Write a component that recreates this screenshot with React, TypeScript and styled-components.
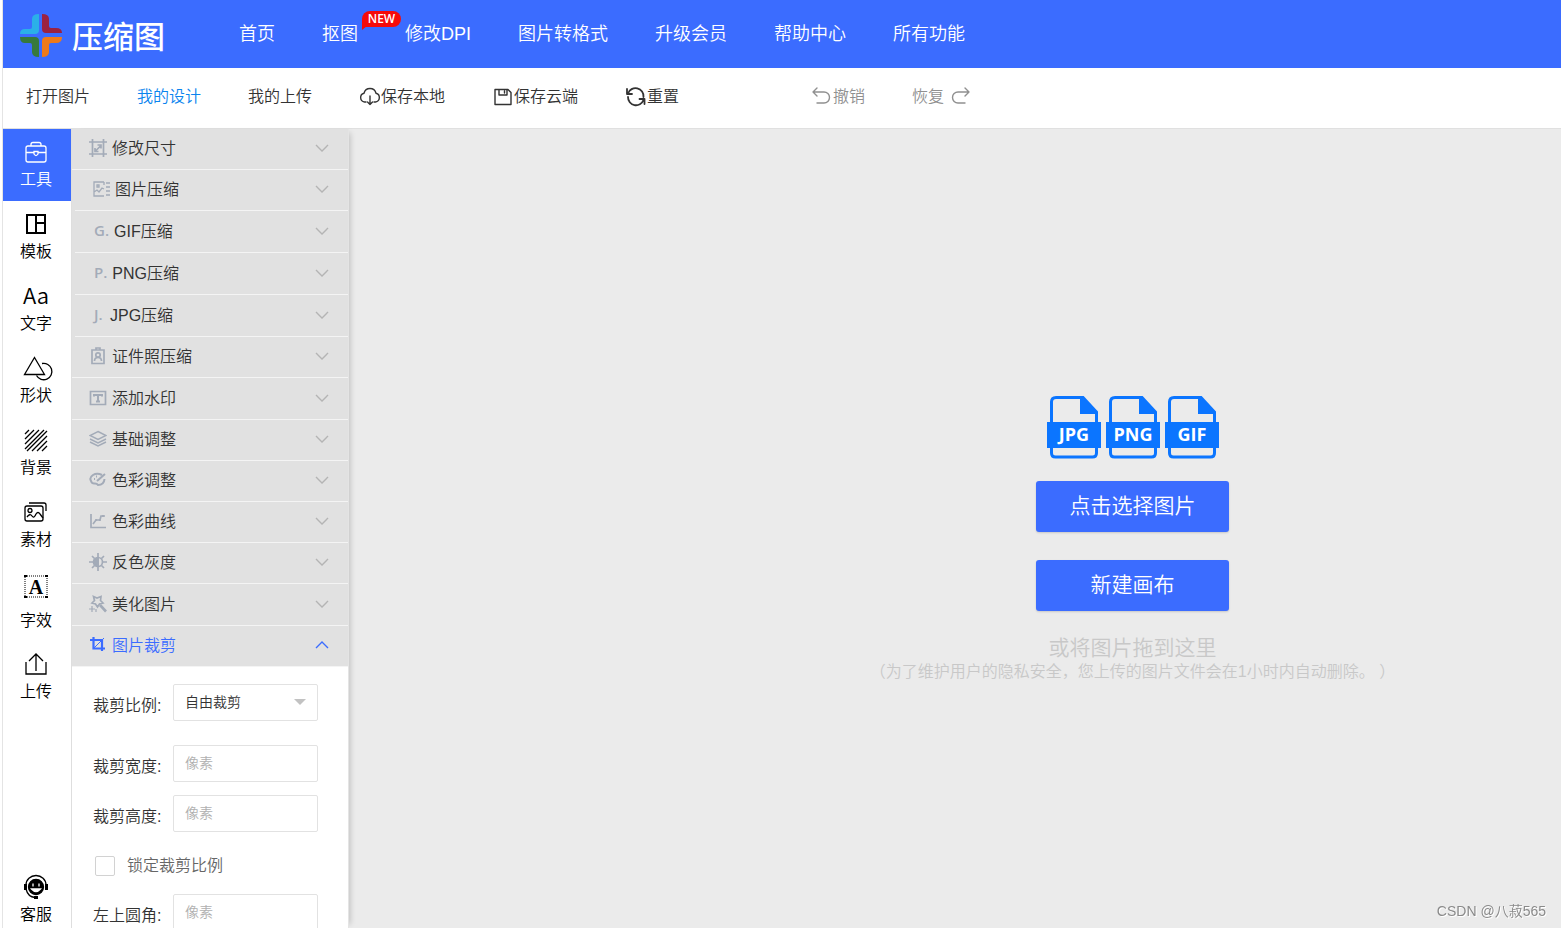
import React from "react";
import styled, { createGlobalStyle, css } from "styled-components";

const BLUE = "#3b6cff";
const FONT = `"Liberation Sans", "Noto Sans CJK SC", sans-serif`;

const GlobalStyle = createGlobalStyle`
  *, *::before, *::after { box-sizing: border-box; }
  body { margin: 0; background: #fff; font-family: ${FONT}; font-weight: 350; color: #333; }
  button, input, select { font: inherit; color: inherit; }
  a { color: inherit; text-decoration: none; }
`;

const Shell = styled.div`
  display: flex;
  flex-direction: column;
  height: 100vh;
  margin-left: 2px;
  border-left: 1px solid #e4e4e4;
  overflow: hidden;
`;

const Header = styled.header`
  display: flex;
  align-items: center;
  flex: none;
  height: 68px;
  padding-left: 16px;
  background: ${BLUE};
  color: #fff;
`;

const Brand = styled.a`
  display: flex;
  align-items: center;
  gap: 9px;
  width: 220px;
  padding-top: 4px;
  font: 500 31px/44px "Noto Sans CJK SC", sans-serif;
`;

const BrandName = styled.span`
  padding-bottom: 3px;
`;

const Nav = styled.nav`
  display: flex;
  gap: 47px;
`;

const NavLink = styled.a`
  position: relative;
  font-size: 18px;
  line-height: 28px;
  white-space: nowrap;
`;

const NewBadge = styled.span`
  position: absolute;
  left: 40px;
  top: -9px;
  width: 39px;
  height: 16px;
  border-radius: 8px 8px 8px 0;
  background: #f60a0a;
  font: 600 12px/16px "Open Sans", sans-serif;
  text-align: center;

  &::after {
    content: "";
    position: absolute;
    left: 0;
    bottom: -3px;
    border-left: 5px solid #f60a0a;
    border-bottom: 4px solid transparent;
  }
`;

const Toolbar = styled.div`
  display: flex;
  align-items: center;
  flex: none;
  height: 61px;
  padding: 0 22px 2px 23px;
  border-bottom: 1px solid #e0e0e0;
  background: #fff;
`;

const ToolGroup = styled.div<{ $end?: boolean }>`
  display: flex;
  align-items: center;
  gap: 47px;
  ${(p) => p.$end && css`margin-left: 132px;`}
`;

const ToolButton = styled.button<{ $tone?: "active" | "muted" }>`
  display: flex;
  align-items: center;
  padding: 0;
  border: 0;
  background: none;
  font-size: 16px;
  line-height: 24px;
  white-space: nowrap;
  color: ${(p) => (p.$tone === "active" ? "#0a84ee" : p.$tone === "muted" ? "#909090" : "#333")};
`;

const ToolIcon = styled.svg.attrs({
  width: 22,
  height: 22,
  viewBox: "0 0 22 22",
  fill: "none",
  stroke: "currentColor",
  strokeLinecap: "round",
  strokeLinejoin: "round",
  "aria-hidden": true,
})<{ $thick?: boolean }>`
  flex: none;
  stroke-width: ${(p) => (p.$thick ? 1.8 : 1.4)};
`;

const Workspace = styled.div`
  display: flex;
  flex: 1;
  min-height: 0;
`;

const Rail = styled.nav`
  display: flex;
  flex-direction: column;
  flex: none;
  width: 69px;
  border-right: 1px solid #dedede;
  background: #fff;
`;

const RailButton = styled.button<{ $active?: boolean; $wide?: boolean; $bottom?: boolean }>`
  display: flex;
  flex-direction: column;
  align-items: center;
  flex: none;
  gap: ${(p) => (p.$wide ? "11px" : "2px")};
  height: ${(p) => (p.$wide ? "80px" : p.$bottom ? "64px" : "72px")};
  padding: 9px 2px 0 0;
  border: 0;
  background: ${(p) => (p.$active ? BLUE : "transparent")};
  color: ${(p) => (p.$active ? "#fff" : "#000")};
  font-size: 16px;
  line-height: 24px;
  ${(p) => p.$bottom && css`margin-top: auto;`}
`;

const RailIcon = styled.svg.attrs({
  width: 28,
  height: 28,
  viewBox: "0 0 28 28",
  fill: "none",
  stroke: "currentColor",
  "aria-hidden": true,
})`
  flex: none;
  stroke-width: 1.3;
  overflow: visible;
`;

const Panel = styled.aside`
  position: relative;
  z-index: 1;
  flex: none;
  width: 277px;
  overflow: hidden auto;
  scrollbar-width: none;
  border-right: 1px solid #e4e4e4;
  background: #fff;
  box-shadow: 5px 0 6px -4px rgba(0, 0, 0, 0.2);
`;

const AccordionList = styled.div`
  background: #e1e1e1;
`;

const AccordionRow = styled.button<{ $tall?: boolean; $inset?: boolean; $active?: boolean }>`
  display: flex;
  align-items: center;
  width: ${(p) => (p.$inset ? "calc(100% - 3px)" : "100%")};
  height: ${(p) => (p.$tall ? "42px" : "41px")};
  margin-left: ${(p) => (p.$inset ? "3px" : "0")};
  padding: 0 19px 0 17px;
  border: 0;
  border-bottom: 1px solid #f4f4f4;
  background: none;
  color: ${(p) => (p.$active ? BLUE : "#333")};
  font-size: 16px;
  line-height: 24px;
  text-align: left;
`;

const RowGlyph = styled.svg.attrs({
  width: 18,
  height: 18,
  viewBox: "0 0 18 18",
  fill: "none",
  "aria-hidden": true,
})<{ $active?: boolean }>`
  flex: none;
  margin: 0 5px 2px 0;
  stroke: ${(p) => (p.$active ? BLUE : "#a3abb8")};
  color: ${(p) => (p.$active ? BLUE : "#a3abb8")};
  stroke-width: 1.7;
`;

const RowLetter = styled.span`
  min-width: 18px;
  padding: 0 5px 3px 2px;
  color: #a3abb8;
  font: 600 15px/24px "Open Sans", sans-serif;
`;

const RowLabel = styled.span`
  flex: 1;
`;

const Chevron = styled.svg.attrs({ width: 14, height: 8, viewBox: "0 0 14 8", fill: "none", "aria-hidden": true })<{
  $up?: boolean;
}>`
  margin-bottom: 2px;
  stroke: ${(p) => (p.$up ? BLUE : "#b4b4b4")};
  stroke-width: 1.4;
`;

const CropForm = styled.form`
  padding: 17px 30px 0 21px;
`;

const Field = styled.div<{ $gap: number }>`
  display: flex;
  align-items: flex-start;
  margin-bottom: ${(p) => p.$gap}px;
`;

const FieldLabel = styled.label`
  width: 80px;
  padding-top: 10px;
  font-size: 16px;
  line-height: 24px;
`;

const controlStyle = css`
  flex: 1;
  min-width: 0;
  width: 100%;
  height: 37px;
  padding: 0 11px 2px;
  border: 1px solid #e2e2e2;
  border-radius: 2px;
  outline: 0;
  background: #fff;
  font-size: 14px;
  appearance: none;
`;

const TextInput = styled.input`
  ${controlStyle}
  &::placeholder { color: #b0b0b0; opacity: 1; }
`;

const SelectWrap = styled.div`
  display: flex;
  flex: 1;
  position: relative;

  &::after {
    content: "";
    position: absolute;
    right: 12px;
    top: 15px;
    border: 6px solid transparent;
    border-top-color: #c2c2c2;
    border-bottom: 0;
    pointer-events: none;
  }
`;

const Select = styled.select`
  ${controlStyle}
`;

const CheckRow = styled.label`
  display: flex;
  align-items: center;
  gap: 12px;
  height: 20px;
  margin-bottom: 18px;
  padding-left: 2px;
  color: #666;
  font-size: 16px;
  line-height: 20px;
`;

const CheckBox = styled.input.attrs({ type: "checkbox" })`
  appearance: none;
  width: 20px;
  height: 20px;
  margin: 0;
  border: 1px solid #d2d2d2;
  border-radius: 2px;
  background: #fff;
`;

const Canvas = styled.main`
  display: flex;
  flex-direction: column;
  align-items: center;
  flex: 1;
  min-width: 0;
  padding: 267px 0 0 355px;
  background: #ebebeb;
`;

const FileIcons = styled.div`
  display: flex;
  gap: 5px;
  margin-bottom: 22px;
`;

const FileSvg = styled.svg.attrs({ width: 54, height: 63, viewBox: "0 0 54 63" })`
  font: 700 18px "Open Sans", sans-serif;
`;

const Actions = styled.div`
  display: flex;
  flex-direction: column;
  gap: 28px;
  margin-bottom: 25px;
`;

const PrimaryButton = styled.button`
  width: 193px;
  height: 51px;
  padding: 0 0 2px;
  border: 0;
  border-radius: 3px;
  background: ${BLUE};
  box-shadow: 0 1px 2px rgba(0, 0, 0, 0.15);
  color: #fff;
  font-size: 21px;
  line-height: 30px;
`;

const DropHint = styled.p`
  margin: 0;
  color: #c8c8c8;
  font-size: 21px;
  line-height: 24px;
`;

const PrivacyNote = styled.p`
  margin: 0;
  color: #c8c8c8;
  font-size: 16px;
  line-height: 24px;
  white-space: nowrap;
`;

const Watermark = styled.span`
  position: fixed;
  right: 15px;
  bottom: 7px;
  color: #8a8a8a;
  font-size: 14px;
  line-height: 20px;
  text-shadow: 1px 1px 0 #fff;
`;

const LogoMark = () => (
  <svg width="44" height="46" viewBox="0 0 44 46" aria-hidden="true">
    <path d="M20 1v16q0 4-4 4H1q0-5 5-5h5q2 0 2-2V6q0-5 7-5z" fill="#2bb0e8" />
    <path d="M23 1q7 0 7 5v7q0 2 2 2h5q6 0 6 5H27q-4 0-4-4z" fill="#9b2242" />
    <path d="M1 24h15q4 0 4 4v16q-7 0-7-5v-7q0-2-2-2H6q-5 0-5-6z" fill="#37793c" />
    <path d="M43 24q0 6-6 6h-5q-2 0-2 2v7q0 5-7 5V28q0-4 4-4z" fill="#ee7a1c" />
  </svg>
);

const navItems = ["首页", "抠图", "修改DPI", "图片转格式", "升级会员", "帮助中心", "所有功能"];

const railItems: { label: string; icon: React.ReactNode; wide?: boolean }[] = [
  {
    label: "工具",
    icon: (
      <>
        <rect x="4" y="8" width="20" height="16" rx="2" />
        <path d="M9 8V6.500q0-2 2-2h6q2 0 2 2V8M4 14.500h8M16 14.500h8M12 13.500v2.500q2 3 4 0v-2.500z" />
      </>
    ),
  },
  { label: "模板", icon: <path d="M5 5h18v18H5zM14 5v18M14 13h9" strokeWidth="2" /> },
  {
    label: "文字",
    icon: (
      <text x="14" y="22" textAnchor="middle" fontSize="22" fontFamily="Noto Sans CJK SC" fill="currentColor" stroke="none">
        Aa
      </text>
    ),
  },
  {
    label: "形状",
    icon: (
      <>
        <path d="M12.500 3.500 22.500 20.500H2.500z" />
        <path d="M20 9.500a8.200 8.200 0 1 1-5.500 12" />
      </>
    ),
  },
  {
    label: "背景",
    icon: (
      <path d="M3 8l4-4M3 13l9-9M3 18 17 4M3 23 22 4M5 25 25 5M10 25 25 10M15 25 25 15M20 25l5-5" strokeWidth="1.300" />
    ),
  },
  {
    label: "素材",
    icon: (
      <>
        <rect x="3" y="8" width="18" height="15" rx="2" />
        <path d="M7 5h15q2 0 2 2v6M5 19q3-4 5-1 2 3 4-2 2-3 4 0l3 4" />
        <circle cx="8" cy="12.500" r="2" />
      </>
    ),
  },
  {
    label: "字效",
    wide: true,
    icon: (
      <>
        <rect x="3" y="6" width="22" height="21" strokeDasharray="1 1" strokeWidth="1" />
        <path d="M2 6h3M23 6h3M2 27h3M23 27h3" strokeWidth="2" />
        <text x="14" y="24" textAnchor="middle" fontSize="20" fontWeight="700" fontFamily="Liberation Serif" fill="currentColor" stroke="none">
          A
        </text>
      </>
    ),
  },
  { label: "上传", icon: <path d="M4 12v12h20V12M14 21V5M7 11l7-7 7 7" /> },
];

type RowItem = {
  label: string;
  icon?: React.ReactNode;
  letter?: string;
  tall?: boolean;
  inset?: boolean;
  active?: boolean;
};

const rows: RowItem[] = [
  {
    label: "修改尺寸",
    icon: <path d="M3.500 0v18M14.500 0v18M0 3h18M0 15h18M6 12.500l6-6M8.500 6H12v3.500M6 9v3.500h3.500" />,
  },
  {
    label: "图片压缩",
    inset: true,
    icon: <path d="M12 2H2v14h10M2 12l3-2 2 2 3-4 2 1M12 2v3M14 3h4M14 7h4M14 11h4M14 15h4M5 5h2v2H5z" strokeWidth="1.300" />,
  },
  { label: "GIF压缩", letter: "G.", tall: true, inset: true },
  { label: "PNG压缩", letter: "P.", tall: true, inset: true },
  { label: "JPG压缩", letter: "J.", tall: true, inset: true },
  {
    label: "证件照压缩",
    icon: (
      <>
        <path d="M3 3h12v13.500H3zM7 1h4v2H7zM5.500 14q0-3.500 3.500-3.500t3.500 3.500" />
        <circle cx="9" cy="8" r="2.200" />
      </>
    ),
  },
  {
    label: "添加水印",
    tall: true,
    icon: (
      <>
        <path d="M1.500 2.500h15v13h-15z" />
        <path d="M5 7.500V6h8v1.500M9 6v7M7 12.500h4" strokeWidth="2" />
      </>
    ),
  },
  { label: "基础调整", icon: <path d="M9 1.500 17 5.500 9 9.500 1 5.500zM1 9l8 4 8-4M1 12l8 4 8-4" strokeWidth="1.500" /> },
  {
    label: "色彩调整",
    icon: (
      <>
        <path d="M13 4Q8 1.500 4 4T2 10q1 3 4 2.500 2 0 3 1.500 6 0 6.500-6" strokeWidth="2" />
        <path d="M16 3 8 10M5 8h1M7 5.500h1" strokeWidth="2" />
      </>
    ),
  },
  { label: "色彩曲线", icon: <path d="M2 2v13.500h15M4 12l3-4h4l1-4h4M7 7v2M11 7v2M14 3v2" /> },
  {
    label: "反色灰度",
    icon: (
      <>
        <circle cx="9" cy="9" r="4.500" />
        <path d="M9 5v8a4 4 0 0 1 0-8z" fill="currentColor" />
        <path d="M9 0v18M0 9h4M14 9h4M3 3l2.500 2.500M15 3l-2.500 2.500M3 15l2.500-2.500M15 15l-2.500-2.500" />
      </>
    ),
  },
  {
    label: "美化图片",
    tall: true,
    icon: (
      <>
        <path d="M4.500 1.500 8 3l4-1.500-.500 4 2.500 2.500-3.500 1L8.500 12 6.500 9 3 8l2.500-2.500z" />
        <path d="M11 10l6 6.500" strokeWidth="2.600" />
        <path d="M3 11v6M0 14h6M7 14v3" strokeWidth="1.200" />
      </>
    ),
  },
  {
    label: "图片裁剪",
    active: true,
    icon: (
      <>
        <path d="M1 4h12v11M4.500 1v11.500H16" strokeWidth="2.200" />
        <path d="M5 12 15 2" strokeWidth="1" />
      </>
    ),
  },
];

const FileIcon = ({ type }: { type: string }) => (
  <FileSvg role="img" aria-label={type}>
    <path d="M4.500 26V6q0-4.500 4.500-4.500h27L49.500 16v10M4.500 50v7q0 4 4 4h37q4 0 4-4v-7" fill="none" stroke="#0b75ff" strokeWidth="3" />
    <path d="M33 0 51 18H33z" fill="#0b75ff" />
    <path d="M0 26h54v26H0z" fill="#0b75ff" />
    <text x="27" y="45" textAnchor="middle" fill="#fff">
      {type}
    </text>
  </FileSvg>
);

const PixelField = ({ id, label, gap }: { id: string; label: string; gap: number }) => (
  <Field $gap={gap}>
    <FieldLabel htmlFor={id}>{label}:</FieldLabel>
    <TextInput id={id} type="text" placeholder="像素" />
  </Field>
);

export default function App() {
  return (
    <>
      <GlobalStyle />
      <Shell>
        <Header>
          <Brand href="#">
            <LogoMark />
            <BrandName>压缩图</BrandName>
          </Brand>
          <Nav>
            {navItems.map((item) => (
              <NavLink href="#" key={item}>
                {item}
                {item === "抠图" && <NewBadge>NEW</NewBadge>}
              </NavLink>
            ))}
          </Nav>
        </Header>
        <Toolbar>
          <ToolGroup>
            <ToolButton type="button">打开图片</ToolButton>
            <ToolButton type="button" $tone="active">我的设计</ToolButton>
            <ToolButton type="button">我的上传</ToolButton>
            <ToolButton type="button">
              <ToolIcon>
                <path d="M7 16H5.500A4.500 4.500 0 0 1 5 7.200a6.200 6.200 0 0 1 12 0A4.500 4.500 0 0 1 16.500 16H15M11 10v8.500M8.500 16l2.500 2.500 2.500-2.500" />
              </ToolIcon>
              保存本地
            </ToolButton>
            <ToolButton type="button">
              <ToolIcon>
                <path d="M3 3.500h13l3 3v12H3zM7 3.500v5.500h8V3.500M12.500 5v2" />
              </ToolIcon>
              保存云端
            </ToolButton>
            <ToolButton type="button">
              <ToolIcon $thick>
                <path d="M2 3v5h5M3 7.500A8 8 0 0 1 18.500 11M19.500 18v-5h-5M18.500 14A8 8 0 0 1 3 11" />
              </ToolIcon>
              重置
            </ToolButton>
          </ToolGroup>
          <ToolGroup $end>
            <ToolButton type="button" $tone="muted">
              <ToolIcon>
                <path d="M6 2 2 6l4 4M2 6h11a5.500 5.500 0 0 1 0 11H6" />
              </ToolIcon>
              撤销
            </ToolButton>
            <ToolButton type="button" $tone="muted">
              恢复&nbsp;
              <ToolIcon>
                <path d="M16 2l4 4-4 4M20 6H9a5.500 5.500 0 0 0 0 11h7" />
              </ToolIcon>
            </ToolButton>
          </ToolGroup>
        </Toolbar>
        <Workspace>
          <Rail>
            {railItems.map((item, i) => (
              <RailButton type="button" key={item.label} $active={i === 0} $wide={item.wide}>
                <RailIcon>{item.icon}</RailIcon>
                {item.label}
              </RailButton>
            ))}
            <RailButton type="button" $bottom>
              <RailIcon>
                <circle cx="14" cy="14" r="7.500" fill="currentColor" />
                <path d="M4 12a10 9.500 0 0 1 20 0M4 16q2 8 9 8.500" />
                <path d="M3.500 11v6M24.500 11v6M12 24.500h4" strokeWidth="3" />
                <path d="M11 10.500v3M17 10.500v3M9.500 16q4.500 5 9 0z" stroke="#fff" fill="#fff" />
              </RailIcon>
              客服
            </RailButton>
          </Rail>
          <Panel>
            <AccordionList>
              {rows.map((row) => (
                <AccordionRow
                  type="button"
                  key={row.label}
                  aria-expanded={!!row.active}
                  $tall={row.tall}
                  $inset={row.inset}
                  $active={row.active}
                >
                  {row.letter ? <RowLetter>{row.letter}</RowLetter> : <RowGlyph $active={row.active}>{row.icon}</RowGlyph>}
                  <RowLabel>{row.label}</RowLabel>
                  <Chevron $up={row.active}>
                    <path d={row.active ? "M1 7l6-6 6 6" : "M1 1l6 6 6-6"} />
                  </Chevron>
                </AccordionRow>
              ))}
            </AccordionList>
            <CropForm>
              <Field $gap={24}>
                <FieldLabel htmlFor="ratio">裁剪比例:</FieldLabel>
                <SelectWrap>
                  <Select id="ratio">
                    <option>自由裁剪</option>
                  </Select>
                </SelectWrap>
              </Field>
              <PixelField id="crop-width" label="裁剪宽度" gap={13} />
              <PixelField id="crop-height" label="裁剪高度" gap={24} />
              <CheckRow>
                <CheckBox />
                锁定裁剪比例
              </CheckRow>
              <PixelField id="radius-top-left" label="左上圆角" gap={13} />
            </CropForm>
          </Panel>
          <Canvas>
            <FileIcons>
              <FileIcon type="JPG" />
              <FileIcon type="PNG" />
              <FileIcon type="GIF" />
            </FileIcons>
            <Actions>
              <PrimaryButton type="button">点击选择图片</PrimaryButton>
              <PrimaryButton type="button">新建画布</PrimaryButton>
            </Actions>
            <DropHint>或将图片拖到这里</DropHint>
            <PrivacyNote>（为了维护用户的隐私安全，您上传的图片文件会在1小时内自动删除。 ）</PrivacyNote>
          </Canvas>
        </Workspace>
      </Shell>
      <Watermark>CSDN @八菽565</Watermark>
    </>
  );
}
